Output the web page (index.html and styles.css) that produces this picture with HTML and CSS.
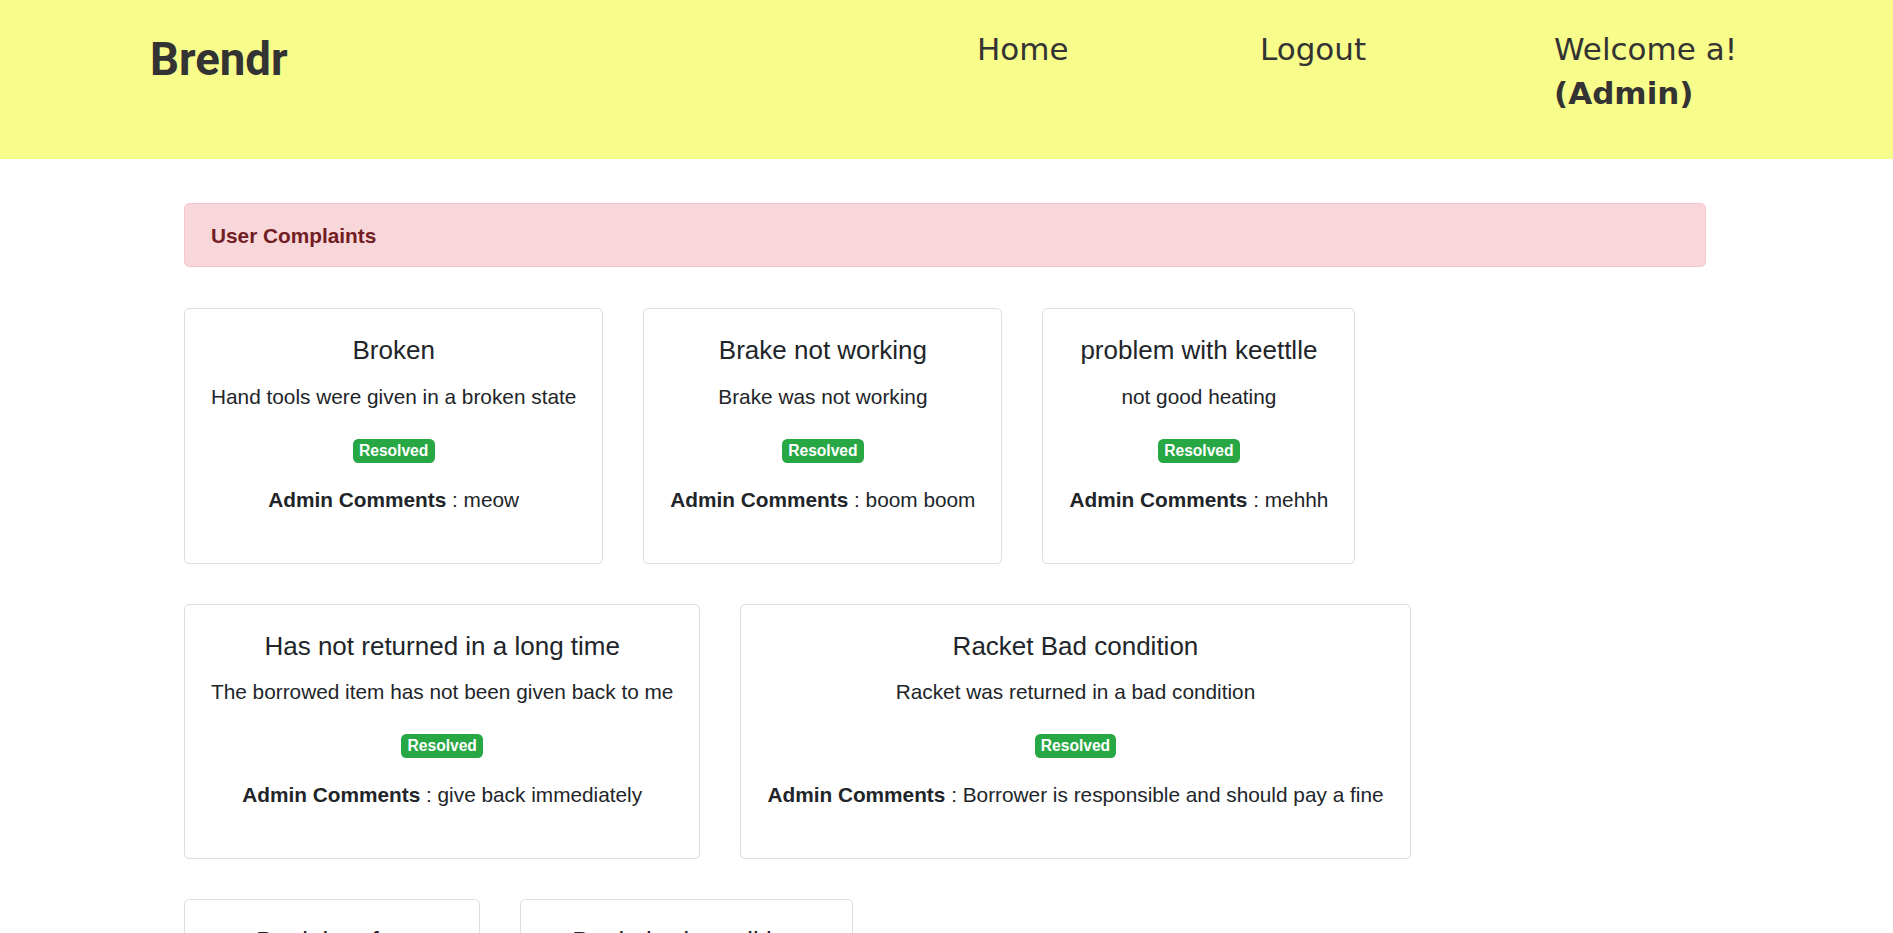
FILE: index.html
```html
<!DOCTYPE html>
<html lang="en">
<head>
<meta charset="utf-8">
<title>Brendr - User Complaints</title>
<link rel="stylesheet" href="styles.css">
</head>
<body>
<header class="topbar">
  <a class="brand" href="#">Brendr</a>
  <nav class="nav">
    <a class="nav-link" href="#">Home</a>
    <a class="nav-link" href="#">Logout</a>
    <div class="nav-user">Welcome a!<br><strong>(Admin)</strong></div>
  </nav>
</header>

<main class="content">
  <div class="alert">User Complaints</div>

  <div class="complaints">
    <div class="card">
      <h5 class="card-title">Broken</h5>
      <p class="card-text">Hand tools were given in a broken state</p>
      <p class="card-status"><span class="badge">Resolved</span></p>
      <p class="card-comment"><strong>Admin Comments</strong> : meow</p>
    </div>
    <div class="card">
      <h5 class="card-title">Brake not working</h5>
      <p class="card-text">Brake was not working</p>
      <p class="card-status"><span class="badge">Resolved</span></p>
      <p class="card-comment"><strong>Admin Comments</strong> : boom boom</p>
    </div>
    <div class="card">
      <h5 class="card-title">problem with keettlle</h5>
      <p class="card-text">not good heating</p>
      <p class="card-status"><span class="badge">Resolved</span></p>
      <p class="card-comment"><strong>Admin Comments</strong> : mehhh</p>
    </div>
    <div class="card">
      <h5 class="card-title">Has not returned in a long time</h5>
      <p class="card-text">The borrowed item has not been given back to me</p>
      <p class="card-status"><span class="badge">Resolved</span></p>
      <p class="card-comment"><strong>Admin Comments</strong> : give back immediately</p>
    </div>
    <div class="card">
      <h5 class="card-title">Racket Bad condition</h5>
      <p class="card-text">Racket was returned in a bad condition</p>
      <p class="card-status"><span class="badge">Resolved</span></p>
      <p class="card-comment"><strong>Admin Comments</strong> : Borrower is responsible and should pay a fine</p>
    </div>
    <div class="card">
      <h5 class="card-title">Book late fee</h5>
      <p class="card-text">Book was returned late</p>
      <p class="card-status"><span class="badge">Resolved</span></p>
      <p class="card-comment"><strong>Admin Comments</strong> : done</p>
    </div>
    <div class="card">
      <h5 class="card-title">Bat in bad condition</h5>
      <p class="card-text">The bat handle was cracked</p>
      <p class="card-status"><span class="badge">Resolved</span></p>
      <p class="card-comment"><strong>Admin Comments</strong> : resolved!</p>
    </div>
  </div>
</main>
</body>
</html>
```

FILE: styles.css
```css
html, body {
  margin: 0;
  padding: 0;
  background: #ffffff;
}

body {
  font-family: "Liberation Sans", Arial, sans-serif;
  font-size: 20.8px;
  line-height: 1.5;
  color: #212529;
}

/* ---------- top bar ---------- */
.topbar {
  display: flex;
  align-items: flex-start;
  box-sizing: border-box;
  height: 159px;
  padding: 27px 0 0 150px;
  background: #f8fc8a;
}

.brand {
  margin-top: 6px;
  font-family: Roboto, "Liberation Sans", sans-serif;
  font-weight: 700;
  font-size: 45.5px;
  line-height: 54px;
  color: #333333;
  text-decoration: none;
}

.nav {
  margin-left: auto;
  width: 916px;
  display: grid;
  grid-template-columns: 283px 294px 1fr;
  font-family: "DejaVu Sans", "Open Sans", sans-serif;
  font-size: 31px;
  line-height: 44px;
  color: #333333;
}

.nav-link {
  color: #333333;
  text-decoration: none;
}

.nav-user strong {
  font-weight: 700;
}

/* ---------- content ---------- */
.content {
  margin: 44px 187px 0 184px;
}

.alert {
  padding: 15.6px 26px;
  margin-bottom: 41px;
  border: 1px solid #f5c6cb;
  border-radius: 5.2px;
  background: #f8d7da;
  color: #721c24;
  font-weight: 700;
}

.complaints {
  display: flex;
  flex-wrap: wrap;
  align-items: flex-start;
  gap: 40px;
}

.card {
  padding: 26px;
  border: 1px solid rgba(0, 0, 0, 0.125);
  border-radius: 5.2px;
  background: #ffffff;
  text-align: center;
}

.card-title {
  margin: 0 0 14.6px;
  font-size: 26px;
  font-weight: 400;
  line-height: 1.2;
}

.card-text {
  margin: 0 0 20.8px;
}

.card-status {
  margin: 0 0 19.3px;
}

.card-comment {
  margin: 0 0 21.8px;
}

.card-comment strong {
  font-weight: 700;
}

.badge {
  display: inline-block;
  padding: 3.9px 6.24px;
  border-radius: 5.2px;
  background: #28a745;
  color: #ffffff;
  font-size: 15.6px;
  font-weight: 700;
  line-height: 1;
  vertical-align: baseline;
}
```
